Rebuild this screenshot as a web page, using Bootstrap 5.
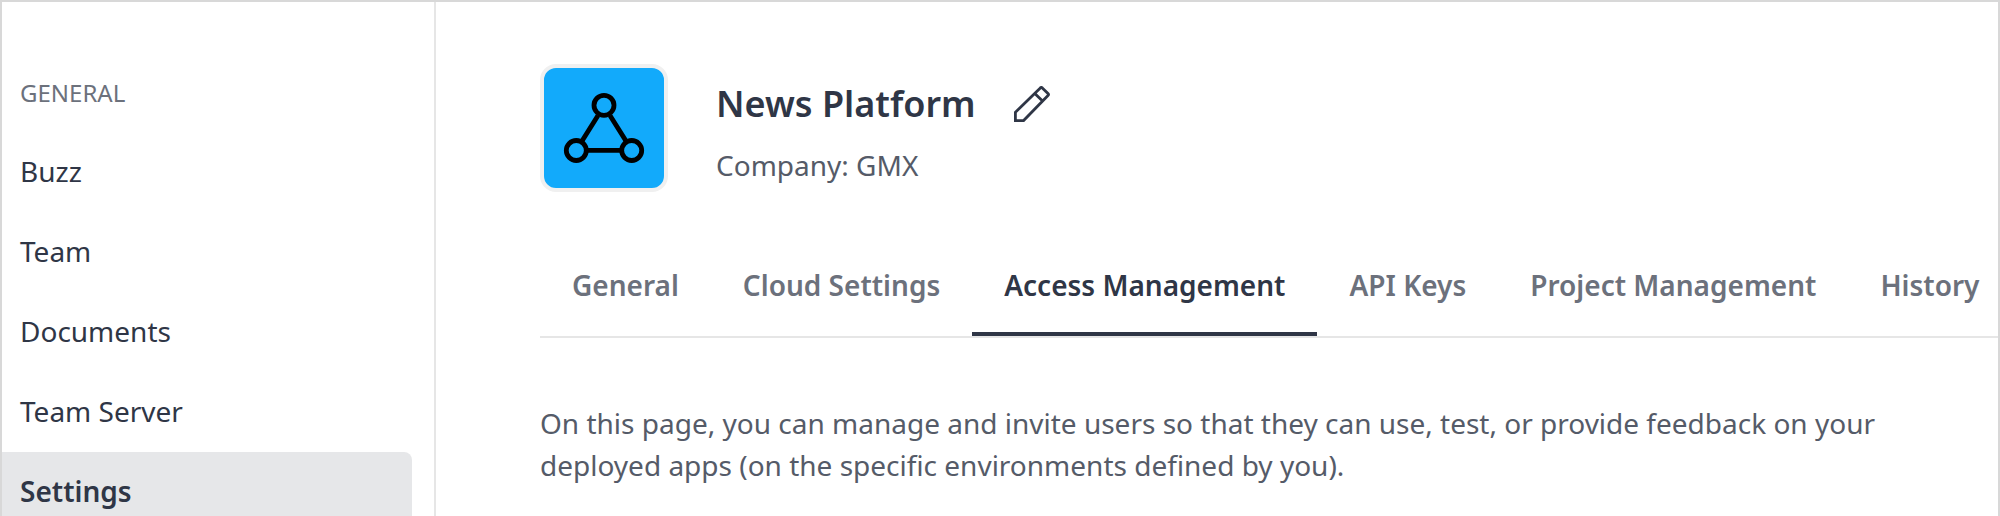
<!DOCTYPE html>
<html lang="en">
<head>
<meta charset="utf-8">
<title>News Platform</title>
<link rel="stylesheet" href="https://cdn.jsdelivr.net/npm/bootstrap@5.3.0/dist/css/bootstrap.min.css">
<style>
body{font-family:"Noto Sans",sans-serif;font-size:28px;line-height:42px;color:#2f3646}
.app-shell{height:516px;border:2px solid #d8d8d8;border-bottom:0}
.sidebar{width:434px;border-right:2px solid #e6e6e6;padding-top:51px}
.side-title{font-size:24px;height:79px;line-height:80px;color:#6c717c;padding-left:18px}
.sidebar .nav-link{width:410px;height:80px;padding:0 18px;line-height:78px;color:#2f3646;border-radius:0 8px 8px 0}
.sidebar .nav-link.active{background:#e6e7e9;font-weight:600}
.main-area{padding:62px 0 0 104px}
.logo-tile{width:128px;height:128px;border:4px solid #f0f0f0;border-radius:16px;background:#12aafb}
.app-name{font-size:36px;line-height:54px;font-weight:600}
.app-head{padding-left:48px;padding-top:13px}
.name-row{gap:38px;height:54px}
.muted{color:#555b68}
.company{padding-top:13px}
.tab-bar{margin-top:42px;height:104px;border-bottom:2px solid #e6e6e6}
.tab-bar .nav-link{height:102px;padding:0 32px;line-height:102px;font-weight:600;color:#6c717c;border-radius:0;white-space:nowrap}
.tab-bar .nav-link.active{color:#2f3646;border-bottom:4px solid #2f3646}
.intro{margin:64px 0 0;width:1360px}
</style>
</head>
<body>
<div class="app-shell d-flex overflow-hidden">
  <aside class="sidebar flex-shrink-0">
    <div class="side-title">GENERAL</div>
    <nav class="nav flex-column flex-nowrap">
      <a class="nav-link">Buzz</a>
      <a class="nav-link">Team</a>
      <a class="nav-link">Documents</a>
      <a class="nav-link">Team Server</a>
      <a class="nav-link active">Settings</a>
    </nav>
  </aside>
  <main class="main-area flex-grow-1 overflow-hidden">
    <header class="d-flex">
      <div class="logo-tile flex-shrink-0">
        <svg class="d-block" width="120" height="120" viewBox="0 0 120 120" fill="none" stroke="#000" stroke-width="4.8">
          <path d="M54 47.500 38 73M66 47.500 82 73M44 82.300H76"/>
          <circle cx="60" cy="37.300" r="10"/><circle cx="32.300" cy="82.500" r="10"/><circle cx="87.700" cy="82.500" r="10"/>
        </svg>
      </div>
      <div class="app-head">
        <div class="name-row d-flex">
          <h1 class="app-name m-0">News Platform</h1>
          <svg style="margin-top:9px" width="36" height="36" viewBox="0 0 36 36" fill="none" stroke="#2f3646" stroke-width="2.800"><path d="M1.400 34.600V26.300L26.300 1.900Q27.300 1 28.300 1.900L34 7.600Q35 8.600 34 9.600L9.600 34.600ZM20.800 7.400 28.800 15.200"/></svg>
        </div>
        <div class="company muted">Company: GMX</div>
      </div>
    </header>
    <nav class="nav tab-bar flex-nowrap">
      <a class="nav-link">General</a>
      <a class="nav-link">Cloud Settings</a>
      <a class="nav-link active">Access Management</a>
      <a class="nav-link">API Keys</a>
      <a class="nav-link">Project Management</a>
      <a class="nav-link">History</a>
    </nav>
    <p class="intro muted">On this page, you can manage and invite users so that they can use, test, or provide feedback on your deployed apps (on the specific environments defined by you).</p>
  </main>
</div>
<script src="https://cdn.jsdelivr.net/npm/bootstrap@5.3.0/dist/js/bootstrap.bundle.min.js"></script>
</body>
</html>
